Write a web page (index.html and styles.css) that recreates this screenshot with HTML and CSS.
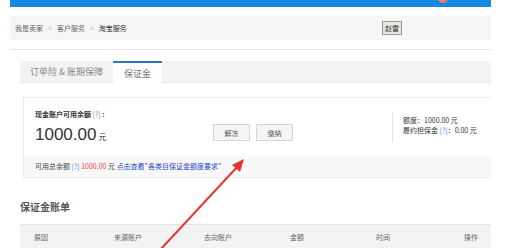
FILE: index.html
```html
<!DOCTYPE html>
<html lang="zh-CN">
<head>
    <meta charset="UTF-8">
    <meta name="viewport" content="width=device-width, initial-scale=1.0">
    <title>保证金</title>
    <link rel="stylesheet" href="styles.css">
</head>
<body>
    <div class="page">
        <div class="topbar">
            <span class="avatar"></span>
        </div>
        <div class="crumbs">
            <span>我是卖家</span>
            <span class="sep">&gt;</span>
            <span>客户服务</span>
            <span class="sep">&gt;</span>
            <span class="current">淘宝服务</span>
            <span class="user-btn">赵雷</span>
        </div>
        <div class="rule"></div>
        <div class="tabs">
            <span class="tab">订单险 &amp; 账期保障</span>
            <span class="tab active">保证金</span>
        </div>
        <section class="card">
            <div class="card-main">
                <div class="balance">
                    <div class="label">现金账户可用余额 <span class="help">[?]</span> :</div>
                    <div class="amount">1000.00<span class="unit">元</span></div>
                </div>
                <div class="actions">
                    <button class="btn">解冻</button>
                    <button class="btn">缴纳</button>
                </div>
                <div class="quota">
                    <div>额度：1000.00 元</div>
                    <div>履约担保金 <span class="help">[?]</span>：0.00 元</div>
                </div>
            </div>
            <div class="card-foot">
                可用总余额 <span class="help">[?]</span> <span class="red">1000.00</span> 元 <a class="link">点击查看"各类目保证金额度要求"</a>
            </div>
        </section>
        <h3 class="title">保证金账单</h3>
        <div class="table-head">
            <span>原因</span>
            <span>来源账户</span>
            <span>去向账户</span>
            <span>金额</span>
            <span>时间</span>
            <span>操作</span>
        </div>
    </div>
    <svg class="arrow" width="506" height="248" viewBox="0 0 506 248">
        <line x1="160" y1="250" x2="238" y2="166" stroke="#e8322b" stroke-width="2"/>
        <polygon points="244,159 240,172 232,165" fill="#e8322b"/>
    </svg>
</body>
</html>
```

FILE: styles.css
```css
body {
    margin: 0;
    background-color: #fff;
    font-family: "Noto Sans CJK SC", "Liberation Sans", sans-serif;
    color: #333;
    overflow: hidden;
}
.page {
    width: 481px;
    margin-left: 10px;
}
.topbar {
    position: relative;
    height: 7px;
    background-color: #168ae3;
}
.avatar {
    position: absolute;
    left: 428px;
    top: -7px;
    width: 10px;
    height: 10px;
    border-radius: 50%;
    background-color: #f0806a;
}
.crumbs {
    display: flex;
    align-items: center;
    gap: 5px;
    height: 24px;
    margin-top: 9px;
    padding-left: 5px;
    background-color: #f6f6f6;
    font-size: 7px;
    color: #666;
}
.crumbs .sep {
    color: #bbb;
}
.crumbs .current {
    color: #333;
}
.user-btn {
    margin-left: auto;
    margin-right: 89px;
    padding: 0 2px;
    height: 12px;
    line-height: 12px;
    border: 1px solid #999;
    background-color: #e8e8e0;
    font-size: 7px;
    color: #333;
}
.rule {
    height: 1px;
    margin-top: 9px;
    background-color: #e6e6e6;
}
.tabs {
    display: flex;
    height: 21px;
    margin-top: 11px;
    margin-left: 10px;
    background-color: #f3f3f3;
    border-bottom: 1px solid #e9e9e9;
}
.tab {
    display: flex;
    align-items: center;
    justify-content: center;
    width: 93px;
    font-size: 9px;
    color: #888;
}
.tab.active {
    width: 49px;
    background-color: #fff;
    border-top: 2px solid #2c75c6;
    margin-bottom: -1px;
    color: #777;
}
.card {
    margin-top: 14px;
    margin-left: 13px;
    border: 1px solid #ececec;
    border-right: none;
}
.card-main {
    display: flex;
    align-items: flex-start;
    height: 47px;
    padding: 11px 0 0 11px;
}
.balance {
    width: 178px;
}
.label {
    font-size: 7px;
    font-weight: bold;
    color: #333;
}
.help {
    color: #4a8ad8;
    font-weight: normal;
}
.amount {
    margin-top: 6px;
    line-height: 20px;
    font-family: "Liberation Sans", sans-serif;
    font-size: 17px;
    color: #333;
}
.unit {
    margin-left: 2px;
    font-family: "Noto Sans CJK SC", sans-serif;
    font-size: 8px;
}
.actions {
    display: flex;
    gap: 6px;
    margin-top: 15px;
}
.btn {
    width: 37px;
    height: 17px;
    padding: 0;
    border: 1px solid #d6d6d6;
    background-color: #f5f5f5;
    font-family: inherit;
    font-size: 7px;
    color: #555;
}
.quota {
    margin-left: 99px;
    margin-top: 4px;
    padding: 2px 0 7px 10px;
    border-left: 1px solid #e2e2e2;
    font-size: 7px;
    line-height: 10px;
    color: #333;
}
.card-foot {
    height: 21px;
    line-height: 21px;
    padding-left: 11px;
    background-color: #f8f8f8;
    font-size: 7px;
    color: #444;
}
.red {
    color: #ee4040;
}
.link {
    color: #2a45c8;
}
.title {
    margin: 18px 0 0 10px;
    height: 28px;
    line-height: 22px;
    font-size: 10px;
    font-weight: bold;
    color: #555;
}
.table-head {
    display: grid;
    grid-template-columns: 80px 90px 86px 86px 88px 1fr;
    align-items: center;
    height: 24px;
    margin-left: 10px;
    padding-left: 14px;
    background-color: #f3f3f3;
    border-top: 1px solid #e4e4e4;
    font-size: 7px;
    color: #666;
}
.arrow {
    position: absolute;
    top: 0;
    left: 0;
    pointer-events: none;
}
```
